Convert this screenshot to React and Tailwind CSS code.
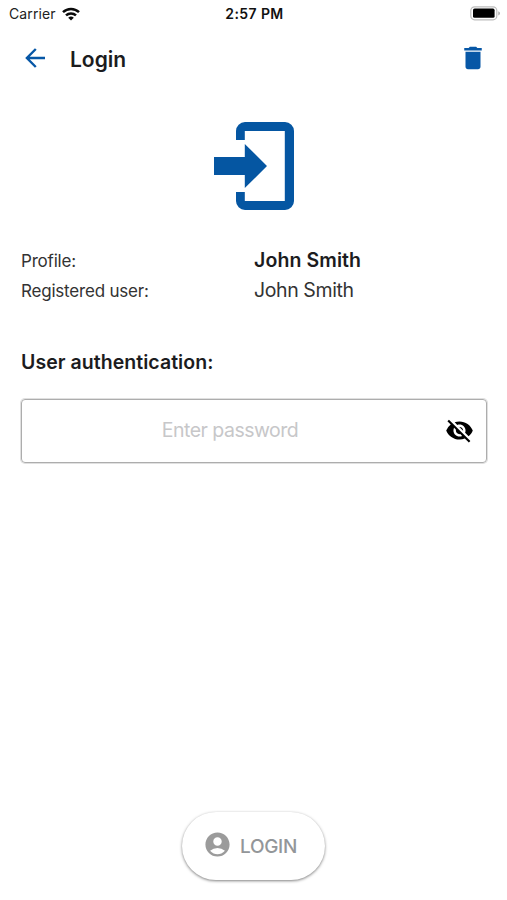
import React from 'react'
import { MdAccountCircle, MdDelete, MdVisibilityOff } from 'react-icons/md'

function WifiIcon() {
  return (
    <svg width="18" height="14" viewBox="0 0 18 14" fill="none" stroke="#0a0a0a" strokeWidth="2.5">
      <path d="M1 5.1a11.6 11.6 0 0 1 16 0" />
      <path d="M4 8.4a7.3 7.3 0 0 1 10 0" />
      <path d="M9 13.6 6.2 10.7a4.1 4.1 0 0 1 5.6 0z" fill="#0a0a0a" stroke="none" />
    </svg>
  )
}

function BatteryIcon() {
  return (
    <svg width="30" height="15" viewBox="0 0 30 15">
      <rect x="0.8" y="0.8" width="26" height="13" rx="3.8" fill="#fff" stroke="#bdbdbd" strokeWidth="1.2" />
      <rect x="3" y="2.6" width="21.6" height="9.2" rx="1.6" fill="#000" />
      <path d="M28.3 5.2c2.2.9 2.2 3.3 0 4.2z" fill="#aaa" />
    </svg>
  )
}

function StatusBar() {
  return (
    <div className="grid h-[27px] grid-cols-3 items-center pl-[9px] pr-[7px] text-sm text-[#222]">
      <div className="flex items-center gap-[6px]">
        <span className="tracking-[0.1px]">Carrier</span>
        <WifiIcon />
      </div>
      <span className="text-center font-semibold tracking-[0.4px] text-[#111]">2:57 PM</span>
      <div className="flex justify-end">
        <BatteryIcon />
      </div>
    </div>
  )
}

function Header() {
  return (
    <header className="flex h-[63px] items-center pl-[25px] pr-[19px]">
      <button className="mb-px" aria-label="Back">
        <svg width="21" height="20" viewBox="0 0 21 20" fill="none" stroke="#0757a6" strokeWidth="2.4">
          <path d="M20 10H2.5M10.8 1 1.9 10l8.9 9" />
        </svg>
      </button>
      <h1 className="ml-6 flex-1 pt-[3px] text-[21px] font-semibold leading-[26px] text-[#1c1c1e]">Login</h1>
      <button className="mb-px text-[#0757a6]" aria-label="Delete">
        <MdDelete size={30} />
      </button>
    </header>
  )
}

function LoginIcon() {
  return (
    <svg width="80" height="88" viewBox="0 0 80 88" fill="#0556a2">
      <path d="M22 18V9a9 9 0 0 1 9-9h40a9 9 0 0 1 9 9v70a9 9 0 0 1-9 9H31a9 9 0 0 1-9-9v-9h8.8v9h40V9h-40v9z" />
      <path d="M0 35h30.8V22L53 44 30.8 66V53H0z" />
    </svg>
  )
}

export default function App() {
  return (
    <div className="flex h-[900px] w-[507px] flex-col bg-white font-['Inter',sans-serif]">
      <StatusBar />
      <Header />

      <div className="mt-8 flex justify-center">
        <LoginIcon />
      </div>

      <dl className="mt-[35px] grid grid-cols-[233px_1fr] px-[21px] leading-[30px] text-[#333]">
        <dt className="pt-px text-[17px] tracking-[-0.2px]">Profile:</dt>
        <dd className="text-[19.5px] font-semibold tracking-[0.1px] text-[#1c1c1e]">John Smith</dd>
        <dt className="text-[17px] tracking-[-0.2px]">Registered user:</dt>
        <dd className="mt-[-1px] text-[19.5px] tracking-[-0.4px]">John Smith</dd>
      </dl>

      <h2 className="mt-[41px] px-[21px] text-[19.5px] font-semibold leading-[30px] tracking-[0.05px] text-[#1c1c1e]">
        User authentication:
      </h2>

      <div className="ml-[21px] mr-5 mt-[22px] flex h-16 items-center rounded-[4px] border border-[#adadad] pb-[2px] pr-3 ring-1 ring-[#e0e0e0]">
        <input
          type="password"
          placeholder="Enter password"
          className="min-w-0 flex-1 pr-[7px] pt-[2px] text-center text-[19.5px] tracking-[-0.5px] outline-none placeholder:text-[#c7c7c9]"
        />
        <MdVisibilityOff size={29} color="#000" />
      </div>

      <button className="mx-auto mb-5 mt-auto flex h-[68px] w-[143px] items-center justify-center gap-2 rounded-full bg-white pr-[7px] text-[19px] font-medium tracking-[-0.3px] text-[#939699] shadow-[0_1px_3px_rgba(0,0,0,0.5)]">
        <MdAccountCircle size={29} color="#9b9b9b" className="mb-[3px]" />
        <span className="pt-[2px]">LOGIN</span>
      </button>
    </div>
  )
}
